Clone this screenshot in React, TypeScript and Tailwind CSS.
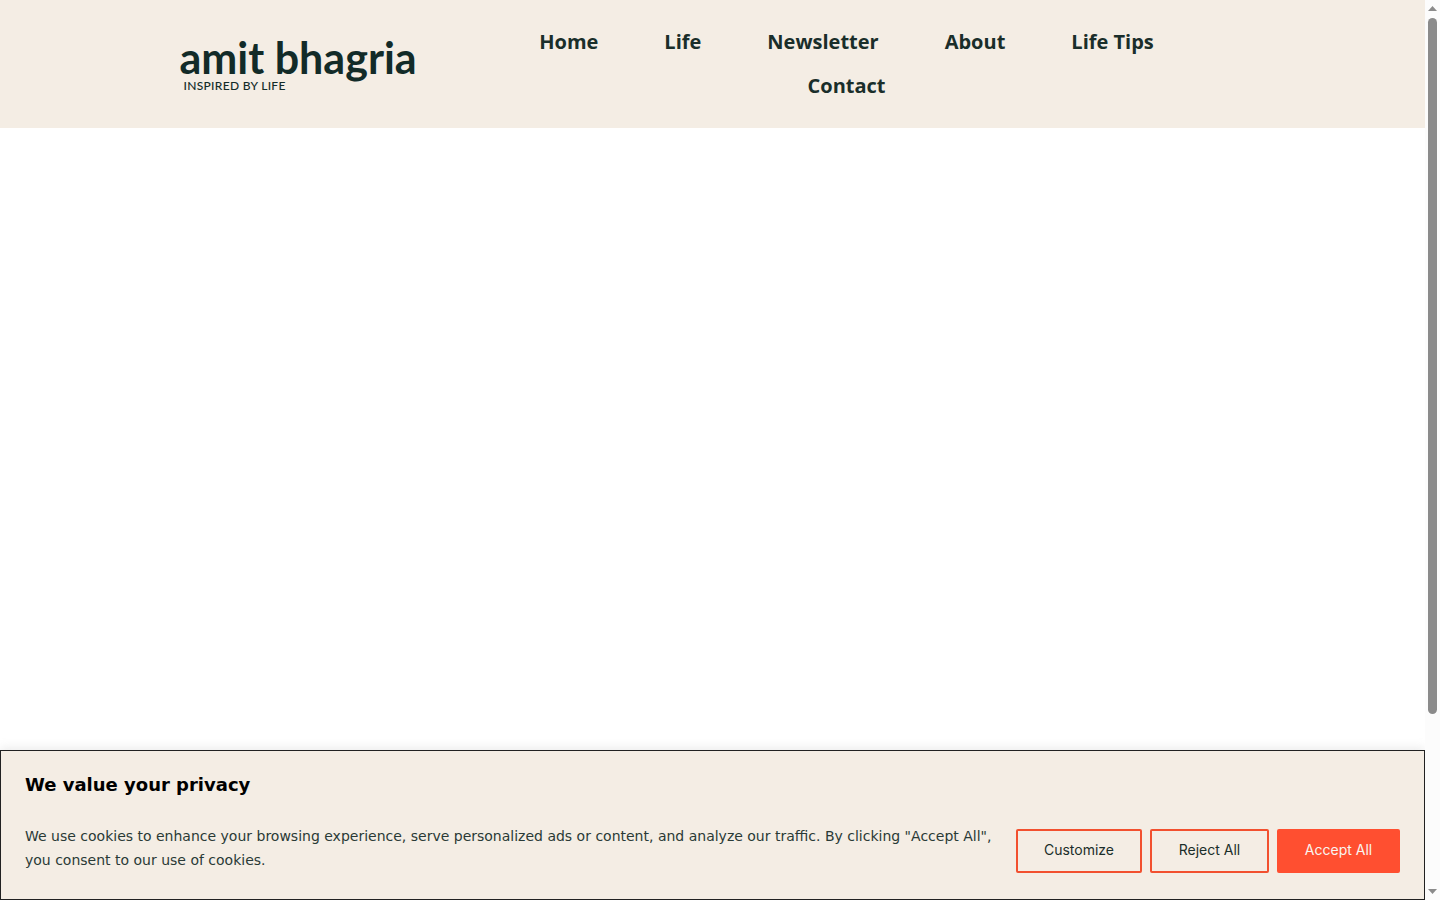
const links = [
  { label: 'Home', href: '#home' },
  { label: 'Life', href: '#life' },
  { label: 'Newsletter', href: '#newsletter' },
  { label: 'About', href: '#about' },
  { label: 'Life Tips', href: '#life-tips' },
  { label: 'Contact', href: '#contact' },
];

function Logo() {
  return (
    <a href="#home" className="flex w-[236px] shrink-0 flex-col self-start whitespace-nowrap pt-[18px] text-[#122b28]">
      <span className="font-['Lato',sans-serif] text-[43px] leading-10 font-bold">amit bhagria</span>
      <span className="pl-1 font-['Lato',sans-serif] text-xs leading-4 font-medium tracking-wide">
        INSPIRED BY LIFE
      </span>
    </a>
  );
}

function Header() {
  return (
    <header className="bg-[#f4ede4] py-5">
      <div className="mx-auto flex max-w-[1066px] items-center gap-8">
        <Logo />
        <nav className="flex flex-1 flex-wrap justify-center">
          {links.map((link) => (
            <a
              key={link.label}
              href={link.href}
              className="px-[33px] font-['Open_Sans',sans-serif] text-xl leading-[44px] font-bold text-[#1a2e2a]"
            >
              {link.label}
            </a>
          ))}
        </nav>
      </div>
    </header>
  );
}

function CookieBanner() {
  return (
    <section
      aria-labelledby="cookie-title"
      className="border border-[#212121] bg-[#f4ede4] px-6 pt-[22px] pb-[26px] shadow-[0_-1px_10px_0_#acabab4d]"
    >
      <h2 id="cookie-title" className="font-['DejaVu_Sans',sans-serif] text-lg leading-6 font-bold text-black">
        We value your privacy
      </h2>
      <div className="mt-[27px] flex items-start gap-6">
        <p className="flex-1 font-['DejaVu_Sans',sans-serif] text-sm leading-6 text-[#2a3a36]">
          We use cookies to enhance your browsing experience, serve personalized ads or content, and analyze our
          traffic. By clicking "Accept All", you consent to our use of cookies.
        </p>
        <div className="flex gap-2 pt-[5px] font-['Inter',sans-serif] text-sm text-[#1a2e2a]">
          <button type="button" className="h-11 w-[126px] rounded-xs border-2 border-[#f2502f] pb-0.5">
            Customize
          </button>
          <button type="button" className="h-11 w-[119px] rounded-xs border-2 border-[#f2502f] pb-0.5">
            Reject All
          </button>
          <button
            type="button"
            className="h-11 w-[123px] rounded-xs border-2 border-[#ff4f30] bg-[#ff4f30] pb-0.5 text-[#f9f5ef]"
          >
            Accept All
          </button>
        </div>
      </div>
    </section>
  );
}

function ScrollRail() {
  return (
    <div aria-hidden="true" className="flex w-[15px] shrink-0 flex-col items-center bg-[#fcfcfc] py-[6px]">
      <svg width="9" height="5" viewBox="0 0 9 5" fill="#8b8b8b">
        <path d="M4.5 0 9 5H0z" />
      </svg>
      <div className="mt-[7px] mb-px flex w-[9px] flex-1 flex-col">
        <div className="h-4/5 rounded-full bg-[#8b8b8b]" />
      </div>
      <svg width="9" height="5" viewBox="0 0 9 5" fill="#8b8b8b">
        <path d="M0 0h9L4.5 5z" />
      </svg>
    </div>
  );
}

export default function App() {
  return (
    <div className="flex min-h-screen bg-white">
      <div className="flex min-w-0 flex-1 flex-col">
        <Header />
        <main className="flex-1" />
        <CookieBanner />
      </div>
      <ScrollRail />
    </div>
  );
}
